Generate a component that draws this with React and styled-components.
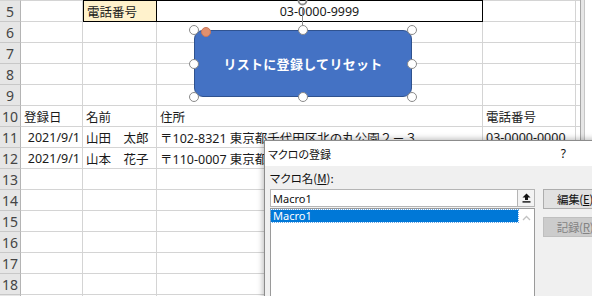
import React from "react";
import styled, { createGlobalStyle, css } from "styled-components";

const Global = createGlobalStyle`
  html, body { margin: 0; padding: 0; background: #fff; }
  body { overflow: hidden; font-family: "Noto Sans", "Noto Sans CJK JP", sans-serif; }
`;

const Page = styled.div`
  position: relative;
  width: 592px;
  height: 296px;
  overflow: hidden;
  background: #fff;
`;

const Sheet = styled.div`
  display: flex;
  height: 100%;
`;

const Grid = styled.div`
  display: grid;
  grid-template-columns: 21px 62px 74px 326px 93px 4px;
  grid-template-rows: 22px;
  grid-auto-rows: 21px;
  align-content: start;
`;

const SplitBar = styled.div`
  width: 3px;
  border-left: 1px solid #a6a6a6;
  border-right: 1px solid #c6c6c6;
  background: #e6e6e6;
`;

const Rest = styled.div`
  flex: 1;
  background: #fff;
`;

const Cell = styled.div`
  box-sizing: border-box;
  border-right: 1px solid #d4d4d4;
  border-bottom: 1px solid #d4d4d4;
  ${(p) => p.$top && css`border-top: 1px solid #d4d4d4;`}
  font-size: 12.5px;
  color: #1a1a1a;
  white-space: nowrap;
  display: flex;
  align-items: center;
  padding: 0 3px;
  justify-content: ${(p) => (p.$align === "right" ? "flex-end" : p.$align === "center" ? "center" : "flex-start")};
  background: ${(p) => p.$fill || "transparent"};
  ${(p) =>
    p.$box &&
    css`
      border: 1px solid #000;
      ${p.$noLeft && css`border-left: none;`}
    `}
  ${(p) => p.$align === "right" && css`padding-right: 2px;`}
`;

const RowHead = styled(Cell)`
  background: #e6e6e6;
  border-right: 1px solid #b4b4b4;
  border-bottom: 1px solid #c8c8c8;
  color: #444;
  font-size: 14px;
  justify-content: center;
  padding: 0;
`;

/* Shape overlay */
const Shape = styled.div`
  position: absolute;
  left: 194px;
  top: 30px;
  width: 218px;
  height: 67px;
  box-sizing: border-box;
  background: #4472c4;
  border: 1px solid #2f528f;
  border-radius: 9px;
  display: flex;
  align-items: center;
  justify-content: center;
  color: #fff;
  font-family: "Noto Sans CJK JP", sans-serif;
  font-weight: 700;
  font-size: 13px;
  letter-spacing: 0.3px;
`;

const Handle = styled.div`
  position: absolute;
  width: 8px;
  height: 8px;
  margin: -5px 0 0 -5px;
  border-radius: 50%;
  background: #fff;
  border: 1.3px solid #8a8a8a;
`;

const Adjust = styled.div`
  position: absolute;
  left: 201px;
  top: 27px;
  width: 8px;
  height: 8px;
  border-radius: 50%;
  background: #e0906f;
  border: 0.5px solid #c9775a;
`;

const RotateLine = styled.div`
  position: absolute;
  left: 302px;
  top: 7px;
  width: 1px;
  height: 18px;
  background: #8a8a8a;
`;

const RotateIcon = styled.svg`
  position: absolute;
  left: 296px;
  top: -6px;
`;

/* Dialog */
const Dialog = styled.div`
  position: absolute;
  left: 264px;
  top: 140px;
  width: 340px;
  height: 200px;
  box-sizing: border-box;
  border: 1px solid #8c8c8c;
  background: #f0f0f0;
  box-shadow: 0 0 6px 1px rgba(0, 0, 0, 0.28);
  font-family: "Noto Sans CJK JP", sans-serif;
  font-feature-settings: "palt";
  display: flex;
  flex-direction: column;
`;

const TitleBar = styled.div`
  height: 25px;
  background: #fff;
  display: flex;
  align-items: center;
  justify-content: space-between;
  padding: 0 37px 0 3px;
  font-size: 11px;
  color: #111;
`;

const Help = styled.span`
  font-family: "Noto Sans", sans-serif;
  font-size: 12px;
`;

const Body = styled.div`
  flex: 1;
  display: flex;
  gap: 8px;
  padding: 5px 0 0 5px;
  min-height: 0;
`;

const LeftCol = styled.div`
  width: 265px;
  flex-shrink: 0;
  display: flex;
  flex-direction: column;
`;

const Label = styled.div`
  height: 14px;
  line-height: 14px;
  font-size: 11.5px;
  color: #111;
  margin-bottom: 4px;
  u { text-decoration: underline; }
`;

const InputRow = styled.div`
  display: flex;
  height: 18px;
`;

const Input = styled.div`
  flex: 1;
  box-sizing: border-box;
  background: #fff;
  border: 1px solid #b5b5b5;
  border-right: none;
  font-family: "Noto Sans", sans-serif;
  font-size: 11px;
  color: #111;
  display: flex;
  align-items: center;
  padding-left: 2px;
`;

const ArrowBtn = styled.div`
  width: 18px;
  box-sizing: border-box;
  border: 1px solid #b5b5b5;
  background: #f3f3f3;
  display: flex;
  align-items: center;
  justify-content: center;
`;

const ListBox = styled.div`
  margin-top: 1px;
  flex: 1;
  box-sizing: border-box;
  background: #fff;
  border: 1px solid #9a9a9a;
  display: flex;
`;

const ListItems = styled.div`
  flex: 1;
  padding: 1px 0 0 0;
`;

const ListItem = styled.div`
  height: 12px;
  line-height: 12px;
  font-family: "Noto Sans", sans-serif;
  font-size: 11px;
  padding-left: 2px;
  color: ${(p) => (p.$selected ? "#fff" : "#111")};
  background: ${(p) => (p.$selected ? "#0078d7" : "transparent")};
  outline: ${(p) => (p.$selected ? "1px dotted #6aa9e6" : "none")};
`;

const ScrollTrack = styled.div`
  width: 16px;
  display: flex;
  justify-content: center;
  padding-top: 6px;
  box-sizing: border-box;
`;

const RightCol = styled.div`
  flex-shrink: 0;
  margin-top: 18px;
  display: flex;
  flex-direction: column;
  gap: 8px;
`;

const DlgButton = styled.div`
  width: 64px;
  height: 20px;
  box-sizing: border-box;
  border: 1px solid ${(p) => (p.$disabled ? "#bfbfbf" : "#adadad")};
  background: ${(p) => (p.$disabled ? "#cccccc" : "#e1e1e1")};
  color: ${(p) => (p.$disabled ? "#838383" : "#111")};
  font-size: 11.5px;
  letter-spacing: -0.3px;
  display: flex;
  align-items: center;
  justify-content: center;
  white-space: nowrap;
  u { text-decoration: underline; }
`;

const handles = [
  [194, 30], [303, 30], [412, 30],
  [194, 64], [412, 64],
  [194, 97], [303, 97], [412, 97],
];

const rows = [
  { n: 5, cells: ["", "電話番号", "03-0000-9999", "", ""] },
  { n: 6 }, { n: 7 }, { n: 8 }, { n: 9 },
  { n: 10, cells: ["登録日", "名前", "住所", "電話番号", ""] },
  { n: 11, cells: ["2021/9/1", "山田　太郎", "〒102-8321 東京都千代田区北の丸公園２－３", "03-0000-0000", ""] },
  { n: 12, cells: ["2021/9/1", "山本　花子", "〒110-0007 東京都", "", ""] },
  { n: 13 }, { n: 14 }, { n: 15 }, { n: 16 }, { n: 17 }, { n: 18 }, { n: 19, hideLabel: true },
];

function cellProps(r, ci, v) {
  const p = {};
  if (r.n === 5) {
    p.$top = true;
    if (ci === 1) { p.$box = true; p.$fill = "#fff2cc"; }
    if (ci === 2) { p.$box = true; p.$noLeft = true; p.$align = "center"; }
  }
  if (ci === 0 && /^\d{4}\//.test(v)) p.$align = "right";
  return p;
}

export default function App() {
  return (
    <Page>
      <Global />
      <Sheet>
        <Grid>
          {rows.map((r) => (
            <React.Fragment key={r.n}>
              <RowHead $top={r.n === 5}>{r.hideLabel ? "" : r.n}</RowHead>
              {(r.cells || ["", "", "", "", ""]).map((v, ci) => (
                <Cell key={ci} {...cellProps(r, ci, v)}>{v}</Cell>
              ))}
            </React.Fragment>
          ))}
        </Grid>
        <SplitBar />
        <Rest />
      </Sheet>

      <RotateLine />
      <RotateIcon width="13" height="13" viewBox="0 0 13 13">
        <path d="M2.5 6.5 A4 4 0 1 0 6.5 2.5" fill="none" stroke="#8a8a8a" strokeWidth="1.8" />
        <path d="M1 5 L2.5 8 L4.5 5 Z" fill="#8a8a8a" />
      </RotateIcon>
      <Shape>リストに登録してリセット</Shape>
      {handles.map(([x, y], i) => (
        <Handle key={i} style={{ left: x, top: y }} />
      ))}
      <Adjust />

      <Dialog>
        <TitleBar>
          <span>マクロの登録</span>
          <Help>?</Help>
        </TitleBar>
        <Body>
          <LeftCol>
            <Label>マクロ名(<u>M</u>):</Label>
            <InputRow>
              <Input>Macro1</Input>
              <ArrowBtn>
                <svg width="9" height="10" viewBox="0 0 9 10">
                  <path d="M4.5 0.5 L8.5 4.5 L6 4.5 L6 7 L3 7 L3 4.5 L0.5 4.5 Z" fill="#111" />
                  <rect x="0.5" y="8.2" width="8" height="1.4" fill="#111" />
                </svg>
              </ArrowBtn>
            </InputRow>
            <ListBox>
              <ListItems>
                <ListItem $selected>Macro1</ListItem>
              </ListItems>
              <ScrollTrack>
                <svg width="9" height="6" viewBox="0 0 9 6">
                  <path d="M1 5 L4.5 1.5 L8 5" fill="none" stroke="#c2c2c2" strokeWidth="1.3" />
                </svg>
              </ScrollTrack>
            </ListBox>
          </LeftCol>
          <RightCol>
            <DlgButton>編集(<u>E</u>)</DlgButton>
            <DlgButton $disabled>記録(<u>R</u>)</DlgButton>
          </RightCol>
        </Body>
      </Dialog>
    </Page>
  );
}
